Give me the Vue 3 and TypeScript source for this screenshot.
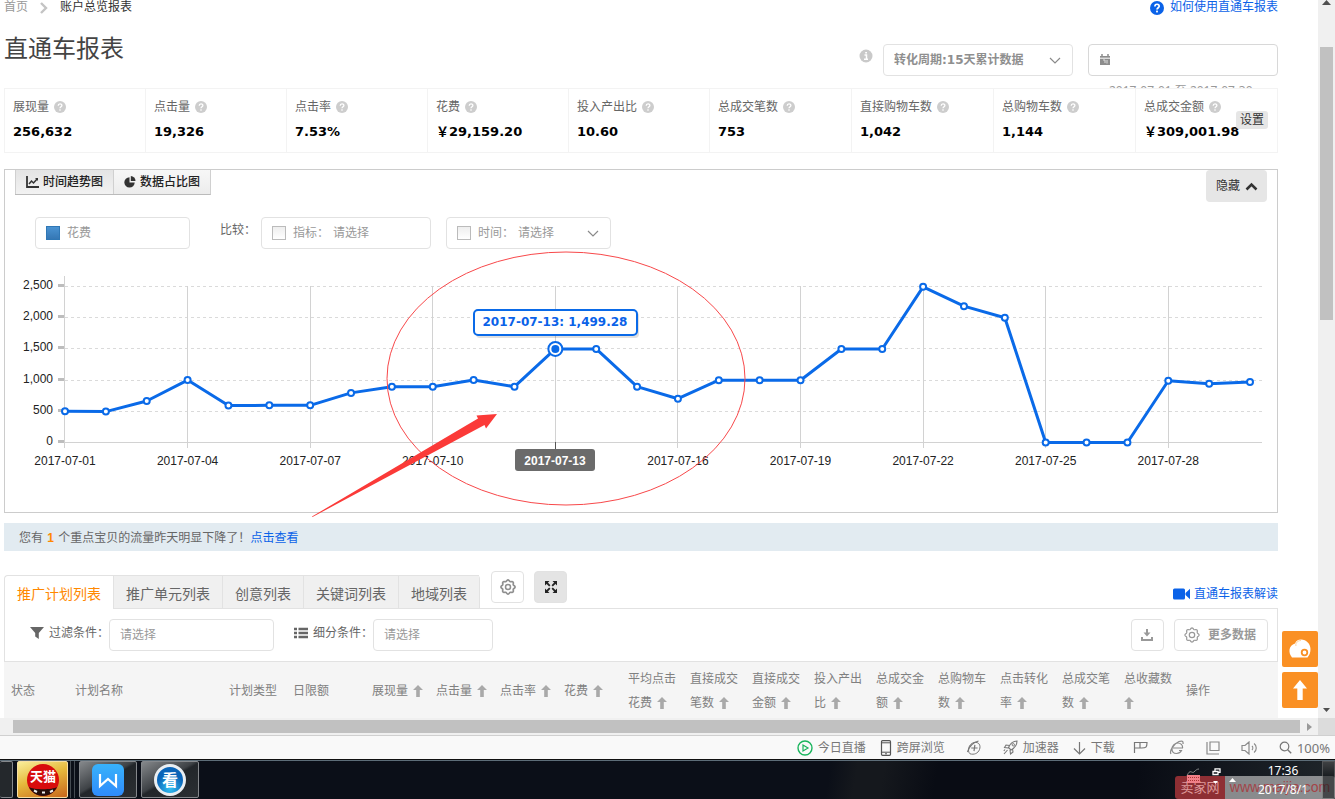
<script setup lang="ts">
import { ref, computed } from 'vue'

interface Stat { label: string; value: string }
interface Column { title: string; sortable: boolean; kind: string }

const stats: Stat[] = [
  { label: '展现量', value: '256,632' },
  { label: '点击量', value: '19,326' },
  { label: '点击率', value: '7.53%' },
  { label: '花费', value: '￥29,159.20' },
  { label: '投入产出比', value: '10.60' },
  { label: '总成交笔数', value: '753' },
  { label: '直接购物车数', value: '1,042' },
  { label: '总购物车数', value: '1,144' },
  { label: '总成交金额', value: '￥309,001.98' },
]

const tabs = ['推广计划列表', '推广单元列表', '创意列表', '关键词列表', '地域列表']
const activeTab = ref(0)

const columns: Column[] = [
  { title: '状态', sortable: false, kind: 'c-short' },
  { title: '计划名称', sortable: false, kind: 'c-name' },
  { title: '计划类型', sortable: false, kind: 'c-short' },
  { title: '日限额', sortable: false, kind: 'c-limit' },
  { title: '展现量', sortable: true, kind: 'c-short' },
  { title: '点击量', sortable: true, kind: 'c-short' },
  { title: '点击率', sortable: true, kind: 'c-short' },
  { title: '花费', sortable: true, kind: 'c-short' },
  { title: '平均点击花费', sortable: true, kind: 'c-num' },
  { title: '直接成交笔数', sortable: true, kind: 'c-num' },
  { title: '直接成交金额', sortable: true, kind: 'c-num' },
  { title: '投入产出比', sortable: true, kind: 'c-num' },
  { title: '总成交金额', sortable: true, kind: 'c-num' },
  { title: '总购物车数', sortable: true, kind: 'c-num' },
  { title: '点击转化率', sortable: true, kind: 'c-num' },
  { title: '总成交笔数', sortable: true, kind: 'c-num' },
  { title: '总收藏数', sortable: true, kind: 'c-num' },
  { title: '操作', sortable: false, kind: 'c-rest' },
]

const costs = [
  500, 495, 665, 1000, 592, 595, 595, 795, 895, 895, 1000, 895, 1499.28, 1499, 895,
  702, 998, 998, 998, 1499, 1499, 2495, 2185, 2000, 0, 0, 0, 990, 940, 970,
]
const activeDay = 12
const px = (i: number) => 65 + (i * 1185) / 29
const py = (v: number) => 442.5 - v * 0.0624

const points = costs.map((v, i) => ({ x: px(i), y: py(v) }))
const line = computed(() => points.map((p) => `${p.x},${p.y}`).join(' '))
const yTicks = [0, 500, 1000, 1500, 2000, 2500]
const xTicks = [0, 3, 6, 9, 12, 15, 18, 21, 24, 27]
const dayName = (i: number) => `2017-07-${String(i + 1).padStart(2, '0')}`

const gearPath = (() => {
  let d = ''
  for (let k = 0; k < 96; k++) {
    const a = (k / 96) * Math.PI * 2
    const r = 6.4 + 0.65 * Math.cos(a * 8)
    d += `${k ? 'L' : 'M'}${(8 + r * Math.cos(a)).toFixed(2)} ${(8 + r * Math.sin(a)).toFixed(2)}`
  }
  return d + 'Z'
})()
</script>

<template>
  <div class="screen">
    <div class="viewport">
      <main class="page">
        <div class="crumbs">
          <nav class="trail">
            <a href="#" class="home">首页</a>
            <svg class="sep" width="8" height="12" viewBox="0 0 8 12"><path d="M1 1l5 5-5 5" fill="none" stroke="#c4c4c4" stroke-width="2.4" /></svg>
            <span>账户总览报表</span>
          </nav>
          <a href="#" class="help">
            <svg width="14" height="14" viewBox="0 0 14 14"><circle cx="7" cy="7" r="7" fill="#0a62e8" /><path d="M4.9 5.4c0-2.8 4.3-2.8 4.3-.2C9.200 6.700 7 6.800 7 8.600" fill="none" stroke="#fff" stroke-width="1.700" /><rect x="6.100" y="9.600" width="1.800" height="1.800" fill="#fff" /></svg>
            <span>如何使用直通车报表</span>
          </a>
        </div>

        <header class="head">
          <h1>直通车报表</h1>
          <div class="tools">
            <svg class="info" width="14" height="14" viewBox="0 0 14 14"><circle cx="7" cy="7" r="6.500" fill="#c9c9c9" /><path d="M5.500 6h2v4M5 10.300h4M6.200 3.700h1.800" fill="none" stroke="#fff" stroke-width="1.500" /></svg>
            <div class="pick period">
              <select aria-label="转化周期"><option>转化周期:15天累计数据</option></select>
              <svg class="chev" width="12" height="8" viewBox="0 0 12 8"><path d="M1 1l5 5 5-5" fill="none" stroke="#8a8a8a" stroke-width="1.200" /></svg>
            </div>
            <button class="pick range" type="button" aria-label="日期范围">
              <svg width="12" height="12" viewBox="0 0 12 12"><path d="M1 2h10v9H1z" fill="#8d8d8d" /><path d="M3 0v3M9 0v3" stroke="#8d8d8d" stroke-width="1.500" /><path d="M1 4.200h10" stroke="#fff" /><path d="M4 6h2v3M8 6v3.500" fill="none" stroke="#ddd" /></svg>
              <span class="dates">2017-07-01 至 2017-07-30</span>
            </button>
          </div>
        </header>

        <section class="stats">
          <div v-for="s in stats" :key="s.label" class="stat">
            <div class="stat-label">
              <span>{{ s.label }}</span>
              <svg width="12" height="12" viewBox="0 0 14 14"><circle cx="7" cy="7" r="7" fill="#cdcdcd" /><path d="M4.900 5.400c0-2.800 4.300-2.800 4.300-.2C9.200 6.700 7 6.800 7 8.600" fill="none" stroke="#fff" stroke-width="1.500" /><rect x="6.200" y="9.700" width="1.600" height="1.600" fill="#fff" /></svg>
            </div>
            <div class="stat-value">{{ s.value }}</div>
          </div>
          <button class="setup" type="button">设置</button>
        </section>

        <section class="panel">
          <div class="panel-top">
            <div class="views">
              <button type="button" class="view on">
                <svg width="13" height="12" viewBox="0 0 13 12"><path d="M1 0v11h12" fill="none" stroke="#333" stroke-width="1.800" /><path d="M3 8l2.500-3 2 2L11.500 2.500" fill="none" stroke="#333" stroke-width="1.500" /><path d="M9 2h3v3z" fill="#333" /></svg>
                <span>时间趋势图</span>
              </button>
              <button type="button" class="view">
                <svg width="12" height="12" viewBox="0 0 12 12"><path d="M5.500 1.200V6.500h5.200A5.200 5.200 0 1 1 5.500 1.200z" fill="#333" /><path d="M6.800 0a5 5 0 0 1 4.700 5H6.800z" fill="#333" /></svg>
                <span>数据占比图</span>
              </button>
            </div>
            <button type="button" class="hide">
              <span>隐藏</span>
              <svg width="13" height="9" viewBox="0 0 13 9"><path d="M1.500 7.500l5-5 5 5" fill="none" stroke="#333" stroke-width="2.500" /></svg>
            </button>
          </div>

          <div class="compare">
            <div class="pick metric">
              <input type="checkbox" class="box" aria-label="花费" checked />
              <select aria-label="主指标"><option>花费</option></select>
            </div>
            <span class="vs">比较：</span>
            <div class="pick against">
              <input id="cmp-metric" type="checkbox" class="box" />
              <label for="cmp-metric">指标：</label>
              <select aria-label="指标"><option>请选择</option></select>
            </div>
            <div class="pick when">
              <input id="cmp-time" type="checkbox" class="box" />
              <label for="cmp-time">时间：</label>
              <select aria-label="时间"><option>请选择</option></select>
              <svg class="chev" width="12" height="8" viewBox="0 0 12 8"><path d="M1 1l5 5 5-5" fill="none" stroke="#8a8a8a" stroke-width="1.200" /></svg>
            </div>
          </div>

          <svg class="chart" viewBox="5 249 1272 263">
            <g stroke="#dadada" stroke-dasharray="3 3">
              <line v-for="v in yTicks.slice(1)" :key="v" x1="65" x2="1262" :y1="Math.floor(py(v)) + 0.5" :y2="Math.floor(py(v)) + 0.5" />
            </g>
            <g stroke="#d2d2d2">
              <line v-for="i in xTicks" :key="i" :x1="Math.floor(px(i)) + (i ? 0.5 : -0.5)" :x2="Math.floor(px(i)) + (i ? 0.5 : -0.5)" :y1="i ? 286 : 276" y2="448" />
              <line x1="64" x2="1262" y1="442.500" y2="442.500" />
            </g>
            <g v-for="v in yTicks" :key="v">
              <rect x="58" :y="Math.floor(py(v)) - 2" width="6" height="3" fill="#bdbdbd" />
              <text class="axis" x="53" :y="Math.floor(py(v)) + 3" text-anchor="end">{{ v.toLocaleString('en-US') }}</text>
            </g>
            <template v-for="i in xTicks" :key="i">
              <text v-if="i !== activeDay" class="axis" :x="px(i)" y="465" text-anchor="middle">{{ dayName(i) }}</text>
            </template>
            <path d="M555.500 442v8" stroke="#555" />
            <rect x="515" y="449" width="80" height="22" rx="3" fill="#6b6b6b" />
            <text class="axis day" x="555" y="465" text-anchor="middle">{{ dayName(activeDay) }}</text>
            <polyline :points="line" fill="none" stroke="#0a6ae8" stroke-width="3" stroke-linejoin="round" />
            <g fill="#fff" stroke="#0a6ae8" stroke-width="2">
              <circle v-for="(p, i) in points" :key="i" :cx="p.x" :cy="p.y" :r="i === activeDay ? 7 : 3" />
            </g>
            <circle :cx="px(activeDay)" :cy="py(1499.28)" r="4" fill="#0a6ae8" />
            <rect x="476" y="312" width="163" height="26" rx="4" fill="#000" opacity="0.120" />
            <rect x="474" y="310" width="163" height="25" rx="4" fill="#fff" stroke="#0a6ae8" stroke-width="2" />
            <text class="tip" x="555" y="326" text-anchor="middle">2017-07-13: 1,499.28</text>
            <ellipse cx="566" cy="378.500" rx="179" ry="126.500" fill="none" stroke="#f8484a" />
            <path d="M312 516.500L478 418.500l-1.500-3L497 414l-11 14.500-1.500-3.500-172 92z" fill="#fb3a38" />
          </svg>
        </section>

        <p class="alert">您有 <b>1</b> 个重点宝贝的流量昨天明显下降了！<a href="#">点击查看</a></p>

        <div class="tabs-row">
          <div class="tabs" role="tablist">
            <button v-for="(t, i) in tabs" :key="t" type="button" role="tab" :class="['tab', { on: i === activeTab }]" :aria-selected="i === activeTab" @click="activeTab = i">{{ t }}</button>
          </div>
          <button type="button" class="icon-btn" aria-label="设置列表">
            <svg width="16" height="16" viewBox="0 0 16 16"><path :d="gearPath" fill="none" stroke="#8f8f8f" stroke-width="1.700" /><circle cx="8" cy="8" r="2.500" fill="none" stroke="#8f8f8f" stroke-width="1.500" /></svg>
          </button>
          <button type="button" class="icon-btn dark" aria-label="全屏">
            <svg width="12" height="12" viewBox="0 0 12 12"><path d="M0 0h4.500L0 4.500zM12 0v4.500L7.500 0zM0 12V7.500L4.500 12zM12 12H7.500L12 7.500z" fill="#222" /><path d="M1 1l3.800 3.800M11 1L7.200 4.800M1 11l3.800-3.800M11 11L7.200 7.200" stroke="#222" stroke-width="1.800" /></svg>
          </button>
          <a href="#" class="video">
            <svg width="17" height="12" viewBox="0 0 17 12"><rect x="0" y="0.500" width="12" height="11" rx="1.500" fill="#0a62e8" /><path d="M17 .8v10.400L12.500 7V5z" fill="#0a62e8" /></svg>
            <span>直通车报表解读</span>
          </a>
        </div>

        <div class="filters">
          <label class="f-label" for="f-a">
            <svg width="14" height="12" viewBox="0 0 14 12"><path d="M0 0h14L8.800 6v6L5.200 9.500V6z" fill="#666" /></svg>
            <span>过滤条件：</span>
          </label>
          <select id="f-a" class="plain wide"><option>请选择</option></select>
          <label class="f-label second" for="f-b">
            <svg width="14" height="12" viewBox="0 0 14 12"><path d="M0 2h3M0 6h3M0 10h3M4.500 2H14M4.500 6H14M4.500 10H14" stroke="#666" stroke-width="2.300" /></svg>
            <span>细分条件：</span>
          </label>
          <select id="f-b" class="plain"><option>请选择</option></select>
          <div class="f-right">
            <button type="button" class="icon-btn" aria-label="下载">
              <svg width="12" height="12" viewBox="0 0 12 12"><path d="M5 0h2v3.500h2.500L6 7.500 2.500 3.500H5z" fill="#999" /><path d="M1 8v3h10V8" fill="none" stroke="#999" stroke-width="2" /></svg>
            </button>
            <button type="button" class="more">
              <svg width="16" height="16" viewBox="0 0 16 16"><path :d="gearPath" fill="none" stroke="#999" stroke-width="1.200" /><circle cx="8" cy="8" r="2.700" fill="none" stroke="#999" stroke-width="1.200" /></svg>
              <span>更多数据</span>
            </button>
          </div>
        </div>

        <table class="grid">
          <colgroup><col v-for="c in columns" :key="c.title" :class="c.kind" /></colgroup>
          <thead>
            <tr>
              <th v-for="c in columns" :key="c.title" scope="col">{{ c.title }}<svg v-if="c.sortable" class="sort" width="10" height="12" viewBox="0 0 10 12"><path d="M5 0l5 5H6.800v7H3.200V5H0z" fill="#a9a9a9" /></svg></th>
            </tr>
          </thead>
        </table>

        <aside class="float">
          <button type="button" aria-label="客服">
            <svg width="24" height="22" viewBox="0 0 24 22"><path d="M4 19.500C2 17 1.200 14.500 1.500 11.500 2 8.500 4 6.500 7 5.500 8 3 10 1.500 13 1.500c5.500 0 9.500 4.500 9.500 9.500 0 3.500-1 6-3 8.500z" fill="#fff" /><path d="M8 8c-1-3 2-5.500 5-5.500" fill="none" stroke="#fbc98d" stroke-width=".8" /><circle cx="16.500" cy="14.500" r="2.800" fill="#fff" stroke="#fa9024" stroke-width="1.800" /></svg>
          </button>
          <button type="button" aria-label="返回顶部">
            <svg width="14" height="20" viewBox="0 0 14 20"><path d="M7 0l7 8.500H9.700V20H4.300V8.500H0z" fill="#fff" /></svg>
          </button>
        </aside>
      </main>

      <div class="vbar">
        <svg width="9" height="5" viewBox="0 0 9 5"><path d="M4.500 0L9 5H0z" fill="#505050" /></svg>
        <div class="vthumb"></div>
        <svg class="down" width="7" height="4" viewBox="0 0 7 4"><path d="M3.500 4L0 0h7z" fill="#505050" /></svg>
      </div>
    </div>

    <div class="hbar">
      <div class="hthumb"></div>
      <svg width="5" height="8" viewBox="0 0 5 8"><path d="M0 0l5 4-5 4z" fill="#999" /></svg>
      <div class="corner"></div>
    </div>

    <div class="status">
      <div class="item txt first">
        <svg width="16" height="16" viewBox="0 0 16 16"><circle cx="8" cy="8" r="7" fill="none" stroke="#19b45c" stroke-width="1.400" /><path d="M6 5l5 3-5 3z" fill="none" stroke="#19b45c" stroke-width="1.200" /></svg>
        <span>今日直播</span>
      </div>
      <div class="item txt">
        <svg width="12" height="16" viewBox="0 0 12 16"><rect x="1.500" y=".7" width="9" height="14.600" rx="1" fill="none" stroke="#555" stroke-width="1.200" /><path d="M1.500 2.800h9M1.500 12.200h9M5 13.800h2" stroke="#555" /></svg>
        <span>跨屏浏览</span>
      </div>
      <div class="item">
        <svg width="16" height="16" viewBox="0 0 16 16"><path d="M4 13.800C1 11 2.500 4 8 2.500c5-1 7 3 5.500 7s-5.500 5.500-9.500 4.300" fill="none" stroke="#777" /><path d="M1.500 12C3 7 7 2.500 12.500 1M5.200 8h6.400M8.900 4.800L8 11.200" fill="none" stroke="#777" stroke-width="1.200" /></svg>
      </div>
      <div class="item txt">
        <svg width="15" height="15" viewBox="0 0 15 15"><path d="M14 1c-4 0-7 3-8.500 6.500L8 10c3.500-2 6-5 6-9zM6.500 5.500L3 5 1.500 7.500l4 .5M9.500 9l.5 3-2.500 2L7 10M4.500 10L1 14M2 9.500L.8 11" fill="none" stroke="#777" stroke-width="1.100" /><circle cx="10.300" cy="4.800" r="1.200" fill="none" stroke="#777" /></svg>
        <span>加速器</span>
      </div>
      <div class="item txt">
        <svg width="13" height="14" viewBox="0 0 13 14"><path d="M6.500 1v12M1 7.500L6.500 13 12 7.500" fill="none" stroke="#777" stroke-width="1.200" /></svg>
        <span>下载</span>
      </div>
      <div class="item">
        <svg width="15" height="13" viewBox="0 0 15 13"><path d="M1.500 12V1.500h12.500c0 5-1 5.500-5.500 5.500H7V1.500M1.500 7H7" fill="none" stroke="#777" stroke-width="1.200" /></svg>
      </div>
      <div class="item">
        <svg width="16" height="16" viewBox="0 0 16 16"><path d="M4 8h9.500C14 5 11.500 3 9 3 5.500 3 3 6 3 9s2 4.500 4.500 4.500c2 0 4-1 5-3H10M2 14C0 11 5 3.500 10 1.500 13 .5 14.500 1 14 4" fill="none" stroke="#8a8a8a" stroke-width="1.200" /></svg>
      </div>
      <div class="item">
        <svg width="14" height="14" viewBox="0 0 14 14"><path d="M1 1v12h12M4 1h9v8.500H4z" fill="none" stroke="#8a8a8a" stroke-width="1.200" /></svg>
      </div>
      <div class="item">
        <svg width="17" height="14" viewBox="0 0 17 14"><path d="M1 4.500h3L8 1v12L4 9.500H1zM11 5c1 1 1 3 0 4M13 2.500c3 2 3 7 0 9" fill="none" stroke="#8a8a8a" stroke-width="1.200" /></svg>
      </div>
      <div class="item zoom">
        <svg width="13" height="13" viewBox="0 0 13 13"><circle cx="5.500" cy="5.500" r="4.300" fill="none" stroke="#777" stroke-width="1.200" /><path d="M8.700 8.700l3.500 3.500" stroke="#777" stroke-width="1.400" /></svg>
        <span>100%</span>
      </div>
    </div>

    <footer class="taskbar">
      <div class="task cut"></div>
      <div class="task hot">
        <svg width="36" height="36" viewBox="0 0 36 36"><circle cx="18" cy="18" r="16" fill="#d80c0c" /><path d="M4 25c4 3 24 3 28 0-2 5-8 9-14 9S6 30 4 25z" fill="#26100c" /><path d="M9 28.500l3 1.500M17 30.500h3M25 30l3-1.500" stroke="#eee" stroke-width="2" /><text x="18" y="19" text-anchor="middle" class="cat">天猫</text></svg>
      </div>
      <div class="stack"></div>
      <div class="task">
        <svg width="32" height="32" viewBox="0 0 32 32"><defs><linearGradient id="w" x1="0" y1="0" x2="0" y2="1"><stop offset="0" stop-color="#38b2fb" /><stop offset="1" stop-color="#2f8bfb" /></linearGradient></defs><rect width="32" height="32" rx="6" fill="url(#w)" /><path d="M8 10v12l8-7 8 7V10" fill="none" stroke="#fff" stroke-width="2.200" /></svg>
      </div>
      <div class="task">
        <svg width="32" height="32" viewBox="0 0 32 32"><defs><radialGradient id="k" cy=".8"><stop offset="0" stop-color="#32c0f2" /><stop offset="1" stop-color="#0964b8" /></radialGradient></defs><circle cx="16" cy="16" r="14.500" fill="url(#k)" stroke="#e9eef2" stroke-width="3" /><text x="16" y="22" text-anchor="middle" class="look">看</text></svg>
      </div>
      <div class="tray">
        <svg class="kb" width="56" height="28" viewBox="0 0 56 28"><path d="M1 8c3-8 5-2 7-4s3-3 5-3" fill="none" stroke="#888" /><rect x="1" y="7" width="13" height="8" fill="#f08088" /><path d="M2 9.500h11M2 12.500h11" stroke="#a33" stroke-dasharray="1 1" /><path d="M27 3.500h5v3h-5zM29 3V.8h5v3.500h-2" fill="none" stroke="#fff" stroke-width="1.300" /><path d="M27 13h5l-2.500 3z" fill="#fff" /><path d="M43 14h7l-3.500-4z" fill="#fff" /></svg>
        <div class="clock"><span>17:36</span><span>2017/8/1</span></div>
        <div class="peek"></div>
      </div>
      <div class="mark"><b>卖家网</b><span>www.maijia.com</span></div>
    </footer>
  </div>
</template>

<style>
html, body { margin: 0; }
</style>

<style scoped>
* { box-sizing: border-box; }
.screen {
  height: 100vh;
  display: flex;
  flex-direction: column;
  overflow: hidden;
  background: #fff;
  font: 12px/18px "Liberation Sans", "Noto Sans CJK SC", sans-serif;
  color: #666;
}
svg { flex: none; display: block; }
a { color: #0a62e8; text-decoration: none; }
button, select, input { font: inherit; color: inherit; margin: 0; }
button { padding: 0; cursor: pointer; border: 0; background: none; }
select { appearance: none; border: 0; background: transparent; padding: 0; outline: none; }

.viewport { flex: 1; min-height: 0; display: flex; }
.page { position: relative; flex: 1; min-width: 0; padding: 0 40px 0 4px; overflow: hidden; }

.crumbs { display: flex; justify-content: space-between; height: 15px; line-height: 15px; }
.trail { display: flex; align-items: center; color: #333; }
.trail .home { color: #999; }
.sep { margin: 0 12px; }
.help { display: flex; align-items: center; gap: 6px; }

.head { display: flex; justify-content: space-between; align-items: flex-start; height: 73px; }
h1 { margin: 16px 0 0; font-size: 24px; line-height: 36px; font-weight: 400; color: #444; }
.tools { display: flex; padding-top: 29px; gap: 15px; }
.info { margin: 5px -5px 0 0; }
.pick { position: relative; display: flex; align-items: center; height: 32px; border: 1px solid #e2e2e2; border-radius: 4px; background: #fff; color: #999; }
.pick select { flex: 1; min-width: 0; height: 30px; }
.pick .chev { position: absolute; right: 11px; top: 12px; pointer-events: none; }
.period { width: 190px; padding-left: 10px; font-family: "DejaVu Sans", "Noto Sans CJK SC", sans-serif; font-weight: 700; color: #8f8f8f; }
.range { width: 190px; padding-left: 10px; border-color: #d8d8d8; }
.dates { position: absolute; top: 37px; left: 20px; font-family: "Noto Sans", "Noto Sans CJK SC", sans-serif; line-height: 18px; white-space: nowrap; }

.stats { position: relative; display: grid; grid-template-columns: 140fr repeat(4, 141fr) repeat(4, 142fr); border: 1px solid #f3f3f3; background: #fff; }
.stat { padding: 9px 0 10px 8px; white-space: nowrap; }
.stat + .stat { border-left: 1px solid #f3f3f3; }
.stat-label { display: flex; align-items: center; gap: 5px; height: 18px; }
.stat-value { margin-top: 6px; font: 700 13px/20px "DejaVu Sans", "Noto Sans CJK SC", sans-serif; color: #000; }
.setup { position: absolute; right: 9px; top: 22px; height: 18px; padding: 0 4px; border-radius: 3px; background: #e6e6e6; color: #333; }

.panel { margin-top: 16px; border: 1px solid #ccc; }
.panel-top { display: flex; justify-content: space-between; align-items: flex-start; padding: 0 10px; }
.views { display: flex; border-bottom: 1px solid #bbb; border-right: 1px solid #d0d0d0; }
.view { display: flex; align-items: center; gap: 4px; height: 24px; padding: 0 10px; border-left: 1px solid #d0d0d0; background: linear-gradient(#f7f7f7, #ececec); font-weight: 500; color: #222; }
.view.on { background: linear-gradient(#e4e4e4, #f2f2f2); }
.hide { display: flex; align-items: center; gap: 5px; height: 32px; padding: 0 9px 0 10px; border-radius: 4px; background: #e6e6e6; color: #333; }
.compare { display: flex; margin-top: 15px; padding-left: 30px; }
.metric { width: 155px; padding-left: 10px; margin-right: 30px; }
.against { width: 170px; padding-left: 10px; margin-right: 15px; }
.when { width: 165px; padding-left: 10px; }
.vs { width: 41px; line-height: 26px; white-space: nowrap; }
.box { appearance: none; width: 14px; height: 14px; margin-right: 7px; border: 1px solid #bbb; background: linear-gradient(#eee, #fff); }
.box:checked { border-color: #2f77b5; background: linear-gradient(#4a93d2, #3577b4); }
.pick label { width: 40px; white-space: nowrap; }
.chart { width: 100%; height: auto; overflow: visible; }
.axis { font: 12px "Liberation Sans", sans-serif; fill: #222; }
.day { font-weight: 700; fill: #fff; }
.tip { font: 700 12px "DejaVu Sans", sans-serif; fill: #0a62e8; }

.alert { margin: 10px 0 0; padding: 6px 15px 4px; background: #e2ebf1; line-height: 18px; }
.alert b { margin: 0 1px; color: #f80; }

.tabs-row { display: flex; align-items: flex-start; margin-top: 20px; height: 37px; }
.tabs { display: flex; margin-top: 4px; border-right: 1px solid #e2e2e2; border-radius: 4px 4px 0 0; margin-right: 11px; }
.tab { height: 33px; padding: 3px 12px 0; font-size: 14px; border-top: 1px solid #e2e2e2; border-left: 1px solid #e2e2e2; background: #f0f0f0; color: #666; white-space: nowrap; }
.tab:first-child { border-radius: 4px 0 0; }
.tab.on { height: 34px; background: #fff; color: #f80; position: relative; }
.icon-btn { display: flex; align-items: center; justify-content: center; width: 33px; height: 32px; border: 1px solid #e2e2e2; border-radius: 4px; background: #fff; }
.icon-btn + .icon-btn { margin-left: 10px; }
.dark { background: #e4e4e4; }
.video { display: flex; align-items: center; gap: 4px; height: 18px; margin: 14px 0 0 auto; }

.filters { display: flex; align-items: flex-start; height: 54px; padding: 10px 9px 0 25px; border: 1px solid #e2e2e2; }
.f-label { display: flex; align-items: center; gap: 5px; height: 28px; width: 79px; white-space: nowrap; }
.f-label.second { margin-left: 20px; }
.plain { width: 120px; height: 32px; padding-left: 10px; border: 1px solid #e2e2e2; border-radius: 4px; color: #999; background: #fff; }
.plain.wide { width: 165px; }
.f-right { display: flex; gap: 10px; margin-left: auto; }
.more { display: flex; align-items: center; gap: 8px; height: 32px; padding: 0 11px 0 9px; border: 1px solid #e2e2e2; border-radius: 4px; font-weight: 700; color: #999; }

.grid { width: 100%; table-layout: fixed; border-collapse: collapse; background: #f5f5f5; }
.grid th { height: 57px; padding: 0 0 0 7px; text-align: left; vertical-align: middle; font-weight: 400; line-height: 24px; color: #808080; }
.c-short { width: 64px; }
.c-name { width: 154px; }
.c-limit { width: 79px; }
.c-num { width: 62px; }
.sort { display: inline-block; vertical-align: -2px; margin: 0 4px 0 5px; }
.grid th:nth-child(17) .sort { margin-left: 0; }

.float { position: absolute; right: 0; bottom: 10px; display: grid; gap: 5px; }
.float button { display: flex; align-items: center; justify-content: center; width: 36px; height: 36px; border-radius: 2px; background: #fa9024; }

.vbar { width: 17px; display: flex; flex-direction: column; align-items: center; background: #f0f0f0; }
.vthumb { width: 13px; height: 273px; margin-top: 42px; background: #c1c1c1; }
.down { margin: auto 0 6px; }
.hbar { flex: none; display: flex; align-items: center; height: 17px; padding-left: 13px; background: #f0f0f0; }
.hthumb { flex: 1; height: 13px; margin-right: 7px; background: #c1c1c1; }
.corner { width: 17px; height: 17px; margin-left: 6px; background: #dcdcdc; }

.status { flex: none; display: flex; align-items: center; justify-content: flex-end; height: 24px; padding-right: 5px; border-top: 1px solid #d0d0d0; background: #f9f9f9; color: #777; }
.item { display: flex; align-items: center; gap: 5px; margin-left: 21px; }
.item.txt { margin-left: 14px; }
.item:nth-child(4) { margin-left: 21px; }
.item:nth-child(6) { margin-left: 18px; }
.zoom { font: 13px/18px "Noto Sans", sans-serif; }

.taskbar { position: relative; flex: none; display: flex; height: 40px; padding-top: 1px; border-top: 1px solid #111; background: linear-gradient(100deg, #0b0f18 0 62%, #15181d 64% 66%, #090c14 70% 85%, #20262b); box-shadow: inset 0 1px #5d6d78; }
.task { display: flex; align-items: center; justify-content: center; width: 58px; height: 37px; margin-right: 4px; border: 1px solid #85888c; border-radius: 2px; background: linear-gradient(150deg, #85888b 0, #3e4246 45%, #22262a 50%, #2b2f33); }
.cut { width: 13px; border-left: 0; background: #24282c; }
.hot { width: 51px; border-color: #f7dfa4; background: linear-gradient(160deg, #f9ee9a, #e6b93c 45%, #c8661c); margin-right: 2px; }
.stack { width: 5px; height: 37px; margin-right: 4px; border: solid #454b52; border-width: 0 1px; }
.cat { font: 700 13px "Noto Sans CJK SC", sans-serif; fill: #fff; }
.look { font: 700 16px "Noto Sans CJK SC", sans-serif; fill: #fff; }
.tray { position: relative; z-index: 1; display: flex; margin-left: auto; color: #fff; }
.kb { margin-top: 7px; }
.clock { display: grid; width: 82px; margin-right: -2px; text-align: center; align-content: start; font: 12px/19px "Noto Sans", sans-serif; }
.peek { width: 13px; height: 38px; border: 1px solid #777; background: linear-gradient(#555, #16191c 40%); opacity: 0.6; }
.mark { position: absolute; right: 0; bottom: 0; display: flex; height: 23px; line-height: 23px; border-radius: 3px; overflow: hidden; }
.mark b { width: 50px; text-align: center; font-weight: 400; font-size: 13px; background: rgba(165, 52, 56, 0.85); color: #d99; }
.mark span { width: 110px; text-align: center; font: 14px/22px "Liberation Sans", sans-serif; white-space: nowrap; background: rgba(200, 200, 200, 0.65); color: #a44448; }
</style>
